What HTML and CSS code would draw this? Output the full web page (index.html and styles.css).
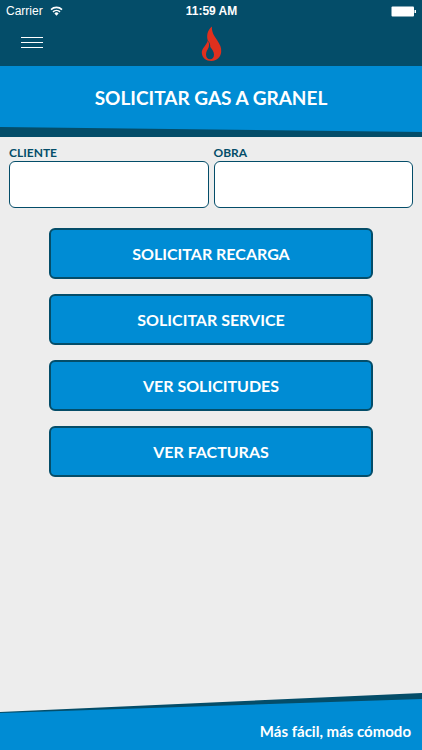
FILE: index.html
```
<!DOCTYPE html>
<html lang="es">
<head>
    <meta charset="UTF-8">
    <meta name="viewport" content="width=device-width, initial-scale=1.0">
    <title>Solicitar gas a granel</title>
    <link rel="stylesheet" href="styles.css">
</head>
<body>
    <header class="header">
        <div class="status-bar">
            <div class="carrier">
                <span>Carrier</span>
                <svg class="wifi" viewBox="0 0 13 10" aria-hidden="true">
                    <path d="M1 3.6a8 8 0 0 1 11 0M3 5.9a5.1 5.1 0 0 1 7 0" fill="none" stroke="#fff" stroke-width="1.6"/>
                    <path d="M4.4 7.5a2.8 2.8 0 0 1 4.2 0L6.5 9.7z" fill="#fff"/>
                </svg>
            </div>
            <span class="time">11:59 AM</span>
            <svg class="battery" viewBox="0 0 26 11" aria-hidden="true">
                <rect x="0.5" y="0.5" width="22.5" height="10" rx="1" fill="#fff"/>
                <rect x="23.500" y="4" width="1.500" height="3" fill="#fff"/>
            </svg>
        </div>
        <nav class="nav-bar">
            <button class="menu-button" type="button" aria-label="Menú">
                <span></span>
                <span></span>
                <span></span>
            </button>
            <svg class="logo" viewBox="0 0 22 36" aria-hidden="true">
                <path d="M12 0.5C11.500 6 14 9.500 17 14C20 18.500 21.600 21.500 21.200 26C20.600 31.500 16.500 35 11.500 35C6 35 1.800 31.500 1.800 26.500C1.800 22 6.500 19.500 7.800 14.500C6.500 10 7 4.500 12 0.500Z" fill="#e0301e"/>
                <path d="M7.600 14.500C9.500 17 9.300 19 8.600 21.500C7.500 24 6 25.500 6 28.500C6 31.500 7.700 33.300 10 33.300C12.500 33.300 14 31.500 14 28.500C14 25.500 12 23.500 10.300 21C10.300 18.500 9.800 16 7.600 14.500Z" fill="#044d69"/>
            </svg>
        </nav>
    </header>

    <div class="banner">
        <h1>SOLICITAR GAS A GRANEL</h1>
    </div>

    <main class="content">
        <form class="fields">
            <div class="field">
                <label for="cliente">CLIENTE</label>
                <input type="text" id="cliente">
            </div>
            <div class="field">
                <label for="obra">OBRA</label>
                <input type="text" id="obra">
            </div>
        </form>
        <div class="actions">
            <button type="button">SOLICITAR RECARGA</button>
            <button type="button">SOLICITAR SERVICE</button>
            <button type="button">VER SOLICITUDES</button>
            <button type="button">VER FACTURAS</button>
        </div>
    </main>

    <footer class="footer">
        <p>Más fácil, más cómodo</p>
    </footer>
</body>
</html>
```
FILE: styles.css
```
* {
    box-sizing: border-box;
}
body {
    margin: 0;
    min-height: 100vh;
    display: flex;
    flex-direction: column;
    background-color: #ededed;
    color: #044d69;
    font-family: Lato, sans-serif;
    font-weight: bold;
}
.header {
    background-color: #044d69;
}
.status-bar {
    display: grid;
    grid-template-columns: 1fr auto 1fr;
    align-items: center;
    height: 22px;
    padding: 0 5px 0 6px;
    color: #fff;
    font-family: "Liberation Sans", Arial, sans-serif;
    font-size: 12px;
    font-weight: normal;
}
.carrier {
    display: flex;
    align-items: center;
    gap: 7px;
}
.wifi {
    width: 13px;
    height: 10px;
}
.time {
    font-weight: bold;
}
.battery {
    width: 26px;
    height: 11px;
    justify-self: end;
}
.nav-bar {
    display: grid;
    grid-template-columns: 1fr auto 1fr;
    align-items: start;
    height: 44px;
    padding: 0 12px;
}
.menu-button {
    display: flex;
    flex-direction: column;
    justify-content: center;
    gap: 4px;
    width: 40px;
    height: 40px;
    padding: 0 9px;
    border: 0;
    background: none;
}
.menu-button span {
    height: 1px;
    background-color: #fff;
}
.logo {
    width: 22px;
    height: 36px;
    margin-top: 4px;
}

/* Franja azul con borde inferior inclinado */
.banner {
    height: 71px;
    position: relative;
    z-index: 0;
    display: flex;
    align-items: center;
    justify-content: center;
    padding-bottom: 7px;
    background-color: #044d69;
}
.banner::before {
    content: "";
    position: absolute;
    inset: 0;
    z-index: -1;
    background-color: #008cd4;
    clip-path: polygon(0 0, 100% 0, 100% 66px, 0 61px);
}
.banner h1 {
    margin: 0;
    color: #fff;
    font-size: 19px;
    line-height: 24px;
}

.content {
    flex: 1;
    padding: 8px 9px;
}
.fields {
    display: flex;
    gap: 5px;
}
.field {
    flex: 1;
    min-width: 0;
}
.field label {
    display: block;
    font-size: 12px;
    line-height: 16px;
}
.field input {
    display: block;
    width: 100%;
    height: 47px;
    padding: 0 10px;
    border: 1px solid #044d69;
    border-radius: 6px;
    background-color: #fff;
    color: #044d69;
    font: inherit;
}
.actions {
    display: flex;
    flex-direction: column;
    gap: 15px;
    padding: 20px 40px;
}
.actions button {
    height: 51px;
    border: 2px solid #044d69;
    border-radius: 6px;
    background-color: #008cd4;
    color: #fff;
    font-family: inherit;
    font-size: 16px;
    font-weight: bold;
}

/* Pie con borde superior inclinado */
.footer {
    height: 57px;
    position: relative;
    z-index: 0;
    display: flex;
    align-items: flex-end;
    justify-content: flex-end;
    padding: 0 11px 9px;
    background-color: #044d69;
    clip-path: polygon(0 19px, 100% 0, 100% 100%, 0 100%);
}
.footer::before {
    content: "";
    position: absolute;
    inset: 0;
    z-index: -1;
    background-color: #008cd4;
    clip-path: polygon(0 20px, 100% 6px, 100% 100%, 0 100%);
}
.footer p {
    margin: 0;
    color: #fff;
    font-size: 15px;
    line-height: 20px;
}
```
